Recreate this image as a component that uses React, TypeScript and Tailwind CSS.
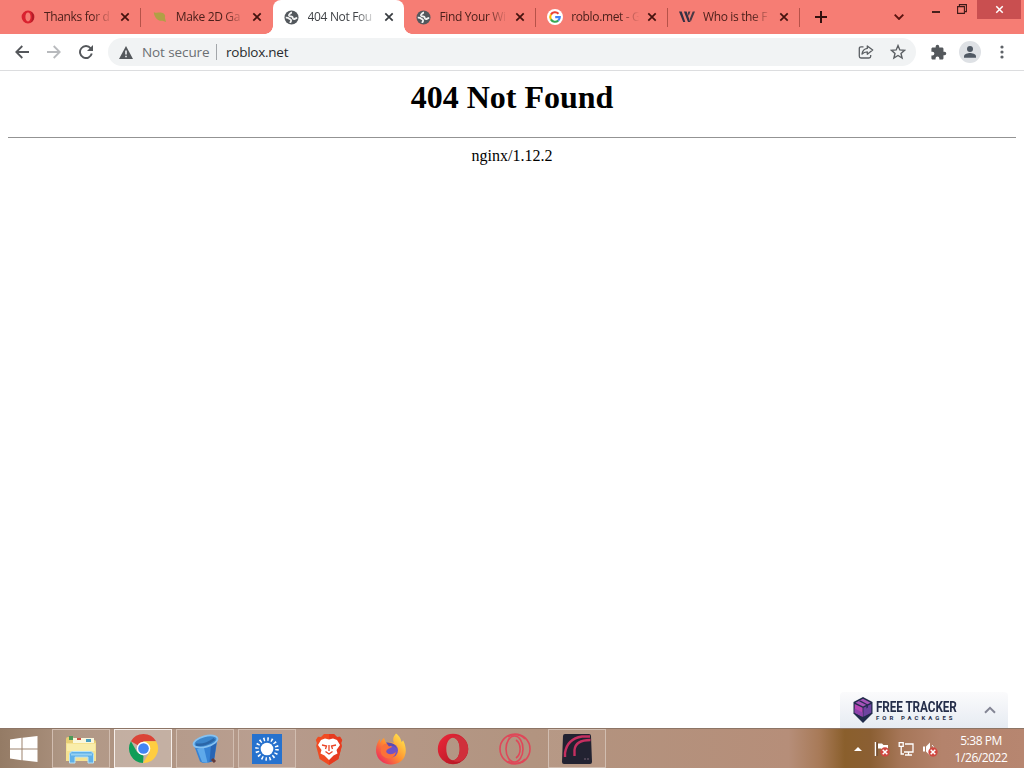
import React from 'react'
import { clsx } from 'clsx'

interface Tab {
  title: string
  icon: React.ReactNode
  active?: boolean
  separator?: boolean
}

function GlobeIcon() {
  return (
    <svg viewBox="0 0 16 16" className="h-[15px] w-[15px]">
      <circle cx="8" cy="8" r="7.5" fill="#53585d" />
      <path
        d="M8.6 2.3C6.6 3.4 5 4.6 5.3 5.9c.4 1.3 2.6.6 3.6 1.5.9.9.1 1.8 1.3 2.2 1.3.4 1.9-.9 3.9-1.2M1.9 8.2c1.6-.2 2.8.3 3.8 1.1 1.2.9 2 .8 1.9 2-.1 1-.9 1.3-.8 2.6"
        fill="none"
        stroke="#f4f4f4"
        strokeWidth="1.9"
      />
      <path d="M8.5 1.6c1.8 0 3.7 1 4.7 2.4l-2 1.6-2.4-1z" fill="#53585d" />
    </svg>
  )
}

function OperaTabIcon() {
  return (
    <svg viewBox="0 0 14 14" className="h-[14px] w-[14px]">
      <path fillRule="evenodd" d="M7 .6a6.4 6.4 0 1 0 0 12.8A6.4 6.4 0 0 0 7 .6zm0 2c1.6 0 2.6 2 2.6 4.4S8.6 11.4 7 11.4 4.4 9.4 4.4 7 5.400 2.6 7 2.6z" fill="#d9222f" />
      <path d="M9.800 1.400a6.400 6.400 0 0 1 0 11.200C11.600 9.500 11.600 4.500 9.800 1.400z" fill="#b01d28" />
    </svg>
  )
}

function LeafIcon() {
  return (
    <svg viewBox="0 0 14 14" className="h-[14px] w-[14px]">
      <path d="M.8 2.2C4 3.3 5 2.4 7.6 2.6c3.4.2 5.3 2.5 4.3 5.2L13 12l-3.300-1.300C5.3 11.5 1.4 8 .8 2.2z" fill="#b0a045" />
    </svg>
  )
}

function GoogleIcon() {
  return (
    <svg viewBox="0 0 16 16" className="h-4 w-4">
      <circle cx="8" cy="8" r="8" fill="#fff" />
      <g fill="none" strokeWidth="2.1">
        <path d="M3.9 5.6A4.8 4.8 0 0 1 11.5 4.8" stroke="#ea4335" />
        <path d="M3.9 5.5a5 5 0 0 0 0 5" stroke="#fbbc05" />
        <path d="M3.9 10.4a4.8 4.8 0 0 0 7.3 1.2" stroke="#34a853" />
        <path d="M8.2 8.1h4.6c0 1.4-.6 2.6-1.6 3.5" stroke="#4285f4" />
      </g>
    </svg>
  )
}

function WikiIcon() {
  return (
    <svg viewBox="0 0 16 14" className="h-[14px] w-4">
      <path d="M0 1.500h2.700l3.600 10.500H4.200zM4.900 1.500h2.700l3.600 10.500H9z" fill="#343044" />
      <path d="M9.400 1.500h2L9.800 6l-1-2.800zM13.700 1.500H16l-4.300 10.500-1-3z" fill="#4a3945" />
    </svg>
  )
}

function CloseIcon({ className }: { className?: string }) {
  return (
    <svg viewBox="0 0 8 8" className={clsx('h-2 w-2 shrink-0 overflow-visible', className)}>
      <path d="M.3.3l7.4 7.4M7.7.3.3 7.7" stroke="currentColor" strokeWidth="1.7" />
    </svg>
  )
}

const tabs: Tab[] = [
  { title: 'Thanks for d', icon: <OperaTabIcon />, separator: true },
  { title: 'Make 2D Ga', icon: <LeafIcon /> },
  { title: '404 Not Fou', icon: <GlobeIcon />, active: true },
  { title: 'Find Your Wi', icon: <GlobeIcon />, separator: true },
  { title: 'roblo.met - G', icon: <GoogleIcon />, separator: true },
  { title: 'Who is the F', icon: <WikiIcon />, separator: true },
]

function BrowserTab({ title, icon, active, separator }: Tab) {
  return (
    <div
      className={clsx(
        'relative flex h-[34px] w-[131.8px] shrink-0 items-center pl-[11px]',
        active ? 'rounded-t-lg bg-white text-[#3f4246]' : 'text-[#4d201b]'
      )}
    >
      {active && (
        <>
          <span className="absolute bottom-0 -left-2 h-2 w-2 bg-[radial-gradient(circle_at_0_0,transparent_7.5px,white_8px)]" />
          <span className="absolute -right-2 bottom-0 h-2 w-2 bg-[radial-gradient(circle_at_100%_0,transparent_7.5px,white_8px)]" />
        </>
      )}
      <span className="flex w-4 shrink-0 justify-center">{icon}</span>
      <span className="ml-2 w-[69px] text-xs tracking-[-0.35px] whitespace-nowrap [mask-image:linear-gradient(to_right,black_70%,transparent_99%)]">
        {title}
      </span>
      <CloseIcon className={clsx('ml-2', active ? 'text-[#383c40]' : 'text-[#44120e]')} />
      {separator && <span className="absolute top-2 right-0 h-[19px] w-px bg-[#b65249]" />}
    </div>
  )
}

function TabStrip() {
  return (
    <div className="flex h-[34px] bg-[#f67d74] pl-[9px]">
      {tabs.map(tab => (
        <BrowserTab key={tab.title} {...tab} />
      ))}
      <svg viewBox="0 0 12 12" className="mt-[11px] ml-[15px] h-3 w-3 shrink-0">
        <path d="M6 0v12M0 6h12" stroke="#32110f" strokeWidth="2" />
      </svg>
      <div className="ml-auto flex items-start">
        <svg viewBox="0 0 10 6" className="mt-[14px] mr-7 h-1.5 w-[10px]">
          <path d="M.7.7 5 5 9.3.7" fill="none" stroke="#5a1410" strokeWidth="1.9" />
        </svg>
        <span className="mt-[11px] mr-[17px] h-0.5 w-2 bg-[#46201c]" />
        <svg viewBox="0 0 10 10" className="mt-1 mr-[10px] h-[10px] w-[10px]">
          <path d="M.6 2.6h6.8v6.8H.6zM2.4 2V.6h7v7H8" fill="none" stroke="#3c1917" strokeWidth="1.1" />
        </svg>
        <div className="mr-[3px] flex h-[19px] w-[44px] items-center justify-center bg-[#c94f50]">
          <CloseIcon className="h-[7px] w-[7px] text-white" />
        </div>
      </div>
    </div>
  )
}

function Toolbar() {
  return (
    <div className="flex h-[37px] items-center border-b border-[#dcdddf] bg-white">
      <svg viewBox="0 0 14 14" className="ml-[15px] h-[14px] w-[14px]">
        <path d="M14 7H1.5M7.3 1 1.3 7l6 6" fill="none" stroke="#54575b" strokeWidth="1.8" />
      </svg>
      <svg viewBox="0 0 14 14" className="ml-[18px] h-[14px] w-[14px]">
        <path d="M0 7h12.5M6.7 1l6 6-6 6" fill="none" stroke="#b8babd" strokeWidth="1.8" />
      </svg>
      <svg viewBox="0 0 14 14" className="ml-[18px] h-[14px] w-[14px]">
        <path d="M11.7 3.3A6 6 0 1 0 12.8 8.6" fill="none" stroke="#54575b" strokeWidth="1.9" />
        <path d="M14 0v6H8z" fill="#54575b" />
      </svg>
      <div className="ml-[15px] flex h-7 w-[808px] items-center rounded-full bg-[#f1f3f4] text-[13.5px]">
        <svg viewBox="0 0 14 13" className="ml-[11px] h-[13px] w-[14px]">
          <path d="M7 0 14 13H0z" fill="#54585c" />
          <path d="M7 4.5V8.5M7 9.7v1.5" stroke="#f1f3f4" strokeWidth="1.6" />
        </svg>
        <span className="ml-[9px] w-[67px] tracking-[-0.1px] whitespace-nowrap text-[#6b6f73]">Not secure</span>
        <span className="ml-[7px] h-4 w-px bg-[#a3a6aa]" />
        <span className="ml-[9px] tracking-[-0.25px] text-[#292b2e]">roblox.net</span>
        <svg viewBox="0 0 16 14" className="mr-[16px] ml-auto h-[14px] w-4" fill="none" stroke="#5b5f63" strokeWidth="1.3">
          <path d="M5.5 1.8H3Q1.3 1.8 1.3 3.5v7.8Q1.3 13 3 13h8q1.7 0 1.7-1.7V10" />
          <path d="M9.3 1v2.4C6 3.8 4.4 6 4 9.2c1.3-1.600 3-2.400 5.300-2.400v2.500L14.700 5z" strokeLinejoin="round" />
        </svg>
        <svg viewBox="0 0 16 16" className="mr-[10px] h-4 w-4">
          <path d="m8 1.6 1.8 4.3 4.7.4L11 9.4l1.1 4.6L8 11.5 3.9 14 5 9.4 1.5 6.3l4.7-.4z" fill="none" stroke="#5b5f63" strokeWidth="1.4" />
        </svg>
      </div>
      <svg viewBox="0 0 24 24" className="ml-[14px] h-[17px] w-[17px]">
        <path
          d="M20.5 11H19V7c0-1.1-.9-2-2-2h-4V3.5a2.5 2.5 0 0 0-5 0V5H4c-1.1 0-2 .9-2 2v3.8h1.5a2.7 2.7 0 0 1 0 5.4H2V20c0 1.1.9 2 2 2h3.8v-1.5a2.7 2.7 0 0 1 5.4 0V22H17c1.1 0 2-.9 2-2v-4h1.5a2.5 2.5 0 0 0 0-5z"
          fill="#54585c"
        />
      </svg>
      <svg viewBox="0 0 22 22" className="ml-3 h-[22px] w-[22px]">
        <circle cx="11" cy="11" r="11" fill="#dee1e5" />
        <circle cx="11" cy="8" r="3" fill="#505964" />
        <path d="M5 16.8v-1.5c0-2 4-3.2 6-3.2s6 1.2 6 3.2v1.5z" fill="#505964" />
      </svg>
      <svg viewBox="0 0 4 14" className="ml-[19px] h-[14px] w-1" fill="#5f6368">
        <circle cx="2" cy="2" r="1.6" />
        <circle cx="2" cy="7" r="1.6" />
        <circle cx="2" cy="12" r="1.6" />
      </svg>
    </div>
  )
}

function TrackerWidget() {
  return (
    <div className="mt-auto mr-4 flex h-9 w-[168px] items-center self-end rounded-t bg-gradient-to-b from-[#fbfbfc] to-[#e6ebf2] font-['Roboto',sans-serif] text-[#252e4a]">
      <svg viewBox="0 0 20 26" className="ml-[13px] h-[26px] w-5">
        <path d="M10 0 19.5 5v11.5L10 26 .5 16.5V5z" fill="#202b4b" />
        <path d="m10 1.800 7.600 4L10 9.600 2.400 5.800z" fill="#a552b8" />
        <path d="M1.700 6.900 9.600 10.800v9L1.700 15.800z" fill="#b746b4" />
        <path d="M18.300 6.900 10.400 10.800v9l7.900-4z" fill="#6d43a0" />
        <path d="M1.700 11.500 9.600 15.500v4.300L1.700 15.800z" fill="#8d43ad" />
        <path d="m6 4.300 7.400 3.800v3.300l1.500-.8V7.400L7.500 3.500z" fill="#282b54" />
      </svg>
      <div className="ml-[3px] w-[83px] whitespace-nowrap">
        <div className="mt-px origin-left scale-x-[.84] text-[14px] leading-[12px] font-bold tracking-[-0.1px]">FREE TRACKER</div>
        <div className="mt-[2px] text-[6px] leading-[6px] font-bold tracking-[3.05px]">FOR PACKAGES</div>
      </div>
      <svg viewBox="0 0 12 8" className="ml-[25px] h-2 w-3">
        <path d="m1 6.8 5-5 5 5" fill="none" stroke="#838594" strokeWidth="2" />
      </svg>
    </div>
  )
}

function ErrorPage() {
  return (
    <main className="flex min-h-0 flex-1 flex-col bg-white pt-2 font-['Liberation_Serif',serif] text-black">
      <h1 className="text-center text-[32px] leading-[37px] font-bold">404 Not Found</h1>
      <hr className="mx-2 mt-[21px] border-t border-[#939393]" />
      <p className="mt-[9px] text-center text-base leading-[18px]">nginx/1.12.2</p>
      <TrackerWidget />
    </main>
  )
}

function ExplorerIcon() {
  return (
    <svg viewBox="0 0 32 32" className="h-8 w-8">
      <path d="M1 6q0-2 2-2h5l2 3h19q2 0 2 2v18H1z" fill="#e8cf75" />
      <path d="M4 3h4v4H4z" fill="#4b9b58" />
      <path d="M8 5h21v5H8z" fill="#faf7db" />
      <path d="M12 5h4v2h-4z" fill="#ce5142" />
      <path d="M21 6h5v3h-5z" fill="#4c9fbe" />
      <path d="M1 10h30v18H1z" fill="#f5e291" />
      <path d="M2 11h28v7H2z" fill="#f9edaa" />
      <path d="M4.500 30V21.500q0-3 3-3h18q3 0 3 3V30h-5.500v-6H10v6z" fill="#5fb0e8" stroke="#b7e2f6" />
      <path d="M6 21.500h21" stroke="#96d1f1" strokeWidth="2" />
    </svg>
  )
}

function ChromeIcon() {
  return (
    <svg viewBox="0 0 32 32" className="h-[31px] w-[31px]">
      <path d="M16 1a15 15 0 0 1 13 7.500H16V16L3 8.500A15 15 0 0 1 16 1z" fill="#db4437" />
      <path d="M3 8.500 9.500 19.800 16 23.500l-.5 7.500A15 15 0 0 1 3 8.500z" fill="#0f9d58" />
      <path d="M16 8.500h13A15 15 0 0 1 15.500 31l7-11.500z" fill="#ffcd40" />
      <circle cx="16" cy="16" r="7" fill="#fff" />
      <circle cx="16" cy="16" r="5.500" fill="#4285f4" />
    </svg>
  )
}

function BinIcon() {
  return (
    <svg viewBox="0 0 32 32" className="h-8 w-8">
      <path d="M4.500 11 11 28.500q5 3.500 14-1L28.500 6z" fill="#3682d4" />
      <path d="m8 16 5 13q3 1 5.500.700L15 15z" fill="#5fa9ea" />
      <path d="m22 12-1.500 17q2.500-.4 4.500-1.500L27.500 9z" fill="#2865b4" />
      <ellipse cx="16.500" cy="8.500" rx="12.300" ry="5.300" transform="rotate(-15 16.500 8.500)" fill="#3c86cc" stroke="#86c2f2" strokeWidth="1.800" />
      <path d="M7 11.500q9 1.500 18.500-5.500" fill="none" stroke="#2a66a8" strokeWidth="2.500" />
      <path d="m23 26 3 3" stroke="#653b3b" strokeWidth="3" />
    </svg>
  )
}

function BrightnessIcon() {
  return (
    <svg viewBox="0 0 30 30" className="h-[30px] w-[30px]">
      <path d="M0 0h30v30H0z" fill="#2772ce" />
      <circle cx="15" cy="15" r="6.300" fill="#fff" />
      <circle cx="15" cy="15" r="10" fill="none" stroke="#fff" strokeWidth="3.500" strokeDasharray="1.500 2.427" />
    </svg>
  )
}

function BraveIcon() {
  return (
    <svg viewBox="0 0 28 32" className="h-8 w-7">
      <path d="m9 1-3 3-3-.3L.8 7l1.1 3-.7 3 3.4 13L14 32l9.400-6 3.400-13-.7-3 1.100-3L25 3.700 22 4l-3-3z" fill="#f04b22" />
      <path d="M14 1h5l3 3 3-.3L27.200 7l-1.100 3 .7 3-3.400 13L14 32z" fill="#e63b20" />
      <path d="m6 7 4-1.500 4 1 4-1L22 7l3 5-3.500 5 1 3.500-4 2L14 27l-4.500-4.500-4-2 1-3.500L3 12z" fill="#fff" />
      <path d="m7 12 4.500 1-1 3M21 12l-4.500 1 1 3M14 12v6M10.500 18.500 14 21l3.500-2.500" fill="none" stroke="#e94324" strokeWidth="1.300" />
    </svg>
  )
}

function FirefoxIcon() {
  return (
    <svg viewBox="0 0 32 32" className="h-8 w-8">
      <defs>
        <linearGradient id="flame" x1="1" y1="0" x2="0" y2="1">
          <stop offset=".1" stopColor="#ffe34d" />
          <stop offset=".5" stopColor="#ff922f" />
          <stop offset=".9" stopColor="#ed295c" />
        </linearGradient>
      </defs>
      <path d="M21 .500c4 3 5 6 5.500 8.500 1.500-1 1.500-2 1.500-2C35 21 28 31.500 16 31.500 7 31.500 1 25 1 17c0-5 2-9 4-11v4c2-4 4-5 4-5l2 5c5-1 8 0 8 0-2-4 0-7.500 2-9.500z" fill="url(#flame)" />
      <circle cx="16" cy="17.500" r="7" fill="#7053c4" />
      <path d="M9 11q6-1 8 3l-4 2q-3 2-1 4 4 3 9-1-2 8-10 6-7-3-5-10z" fill="#fb7139" />
      <path d="M11 9.500q8-1 11 6-4-4-8-2z" fill="#5c4bb2" />
    </svg>
  )
}

function OperaIcon() {
  return (
    <svg viewBox="0 0 32 32" className="h-8 w-8">
      <defs>
        <linearGradient id="opera" x2="1" y2="1">
          <stop stopColor="#ee293a" />
          <stop offset="1" stopColor="#ab1420" />
        </linearGradient>
      </defs>
      <path fillRule="evenodd" d="M16 .8a15.2 15.2 0 1 0 0 30.400A15.200 15.200 0 0 0 16 .8zm0 4c4 0 6.700 5 6.700 11.200S20 27.200 16 27.200 9.300 22.200 9.300 16 12 4.800 16 4.800z" fill="url(#opera)" />
      <path d="M16 4.800c2-3 7-2 10 .3 7 6 7 16 0 21.800-3 2-8 3-10 .3 4 0 6.700-5 6.700-11.200S20 4.800 16 4.800z" fill="#d0303b" />
    </svg>
  )
}

function OperaGxIcon() {
  return (
    <svg viewBox="0 0 32 32" className="h-8 w-8" fill="none" stroke="#df4859" strokeWidth="1.600">
      <circle cx="16" cy="16" r="15" />
      <ellipse cx="15.500" cy="16" rx="8.500" ry="13" />
      <path d="M9 4C13 .500 22 1 26 6M9 28c4 3.500 13 3 17-2M17 7c5.500 4 5.500 14 0 18" />
    </svg>
  )
}

function ArcIcon() {
  return (
    <svg viewBox="0 0 30 30" className="h-[30px] w-[30px]">
      <path d="M3 0h24q2 0 2 2l1 26q0 2-2 2H2q-2 0-2-2L1 2q0-2 2-2z" fill="#222231" />
      <path d="M3 23V19Q5 5 20 2.500h8M12.500 22v-6q1-10 16-10" fill="none" stroke="#c62f60" strokeWidth="2.400" />
      <path d="M23 24v2M26 24v2" stroke="#756174" />
    </svg>
  )
}

const apps = [
  { name: 'explorer', icon: <ExplorerIcon />, state: 'open' },
  { name: 'chrome', icon: <ChromeIcon />, state: 'focused' },
  { name: 'bin', icon: <BinIcon />, state: 'open' },
  { name: 'brightness', icon: <BrightnessIcon />, state: 'open' },
  { name: 'brave', icon: <BraveIcon />, state: 'idle' },
  { name: 'firefox', icon: <FirefoxIcon />, state: 'idle' },
  { name: 'opera', icon: <OperaIcon />, state: 'idle' },
  { name: 'opera-gx', icon: <OperaGxIcon />, state: 'idle' },
  { name: 'arc', icon: <ArcIcon />, state: 'open' },
]

// red circle with a cross, drawn over the flag and the speaker
function ErrorBadge() {
  return (
    <>
      <circle cx="11" cy="11" r="4.700" fill="#cf4840" />
      <path d="m8.700 8.700 4.600 4.600m0-4.600-4.600 4.600" stroke="#fff" strokeWidth="1.500" />
    </>
  )
}

function Tray() {
  return (
    <div className="ml-auto flex h-full items-center">
      <svg viewBox="0 0 8 4" className="h-1 w-2">
        <path d="m0 4 4-4 4 4z" fill="#fff" />
      </svg>
      <svg viewBox="0 0 16 16" className="ml-3 h-4 w-4">
        <path d="M1.500 1v14" stroke="#fff" strokeWidth="1.500" />
        <path d="M4 2.500h4L9.500 4H14v5H8.500L7 7.500H4z" fill="#fff" />
        <path d="M3 1v14" stroke="#5d3f2b" />
        <ErrorBadge />
      </svg>
      <svg viewBox="0 0 16 16" className="ml-2 h-4 w-4" fill="none" stroke="#fff" strokeWidth="1.300">
        <path d="M7 3h8v8H6M7 14h7M10.500 11v3" />
        <path d="M1.200 1.700h4v3.600h-4zM3.200 5.300V13H6" />
      </svg>
      <svg viewBox="0 0 16 16" className="ml-2 h-4 w-4">
        <path d="M1 5.500h2v5H1zM4 5.500l4-4v13l-4-4z" fill="#fff" />
        <path d="M10 4q1.500 1 1.800 3" fill="none" stroke="#eee" />
        <ErrorBadge />
      </svg>
      <div className="mr-[14px] ml-[14px] w-[58px] text-center text-[12px] leading-[17px] tracking-[-0.45px] whitespace-nowrap text-white">
        <div>5:38 PM</div>
        <div>1/26/2022</div>
      </div>
    </div>
  )
}

function Taskbar() {
  return (
    <footer className="flex h-10 shrink-0 items-center border-t border-[#8d7566] bg-[linear-gradient(90deg,#947b65_0,#ad9380_7%,#b69a8b_28%,#b29480_52%,#b68e79_77%,#a87a58_80%,#8a5f2c_82.5%,#8b5f33_85%,#a67658_88%,#b4836c_92%,#b78670_100%)]">
      <div className="flex w-[52px] pl-[10px]">
        <svg viewBox="0 0 28 26" className="h-[26px] w-7" fill="#fff">
          <path d="m0 3.500 11.500-1.700v10.700H0zM12.500 1.700 27.500 0v12.500h-15zM0 13.500h11.500v10.700L0 22.500zM12.500 13.500h15V26l-15-1.700z" />
        </svg>
      </div>
      <div className="flex gap-1">
        {apps.map(app => (
          <div
            key={app.name}
            className={clsx(
              'flex h-[39px] w-[58px] items-center justify-center',
              app.state === 'open' && 'border border-[#d1bdb0] bg-white/5',
              app.state === 'focused' && 'border border-[#f5eeea] bg-white/25'
            )}
          >
            {app.icon}
          </div>
        ))}
      </div>
      <Tray />
    </footer>
  )
}

export default function App() {
  return (
    <div className="flex h-screen w-full flex-col overflow-hidden bg-white font-['Open_Sans','Noto_Sans',sans-serif]">
      <TabStrip />
      <Toolbar />
      <ErrorPage />
      <Taskbar />
    </div>
  )
}
